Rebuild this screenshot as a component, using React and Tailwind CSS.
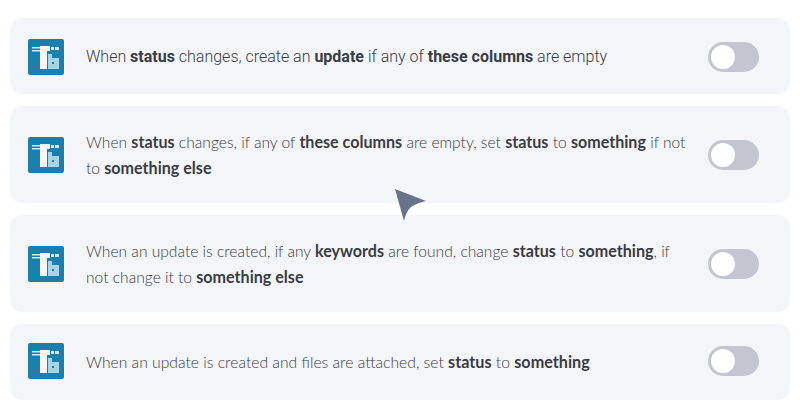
import React from 'react';

const rows = [
  {
    id: 1,
    height: 'h-[76px]',
    side: 'mt-[2px]',
    textStyle: "font-['Roboto',sans-serif] text-[16px] [&_b]:text-[16px]",
    text: (
      <>
        When <b>status</b> changes, create an <b>update</b> if any of <b>these columns</b> are empty
      </>
    ),
  },
  {
    id: 2,
    height: 'h-[97px]',
    side: '',
    textStyle: 'text-[15.6px] [&_b]:text-[16.1px]',
    text: (
      <>
        When <b>status</b> changes, if any of <b>these columns</b> are empty, set <b>status</b> to <b>something</b> if not
        to <b>something else</b>
      </>
    ),
  },
  {
    id: 3,
    height: 'h-[97px]',
    side: '',
    textStyle: 'text-[15.6px] [&_b]:text-[16.1px]',
    text: (
      <>
        When an update is created, if any <b>keywords</b> are found, change <b>status</b> to <b>something</b>, if
        not change it to <b>something else</b>
      </>
    ),
  },
  {
    id: 4,
    height: 'h-[76px]',
    side: 'mb-[3px]',
    textStyle: 'text-[15.7px] [&_b]:text-[16.2px]',
    text: (
      <>
        When an update is created and files are attached, set <b>status</b> to <b>something</b>
      </>
    ),
  },
];

const Logo = ({ className }) => (
  <svg width="36" height="36" viewBox="0 0 36 36" className={`shrink-0 ${className}`}>
    <rect width="36" height="36" rx="2" fill="#1a7fad" />
    <rect x="12" y="7" width="7" height="23" fill="#f4f8fb" />
    <rect x="4" y="8" width="8" height="1.5" fill="#d5e7f0" />
    <rect x="4" y="11" width="8" height="1.5" fill="#d5e7f0" />
    <rect x="19" y="7" width="3" height="5" fill="#f4f8fb" />
    <rect x="23" y="8" width="8" height="3" fill="#d5e7f0" />
    <rect x="26" y="7" width="1" height="5" fill="#1a7fad" />
    <rect x="20" y="15" width="4" height="15" fill="#a8d4e8" />
    <rect x="20" y="19" width="11" height="11" fill="#a8d4e8" />
    <rect x="24" y="23" width="2" height="2" fill="#1a7fad" />
  </svg>
);

const Toggle = ({ className }) => (
  <div className={`flex h-[30px] w-[51px] shrink-0 items-center rounded-full bg-[#c3c6d0] pl-[3px] ${className}`}>
    <div className="h-6 w-6 rounded-full bg-white" />
  </div>
);

const Row = ({ row }) => (
  <div className={`flex items-center rounded-xl bg-[#f4f5f8] pl-[18px] pr-[31px] ${row.height}`}>
    <Logo className={row.side} />
    <p className={`ml-[22px] w-[608px] font-light leading-[25px] text-[#3a3c44] [&_b]:font-bold ${row.textStyle}`}>{row.text}</p>
    <div className="flex-1" />
    <Toggle className={row.side} />
  </div>
);

const App = () => (
  <div className="relative h-[419px] w-[800px] overflow-hidden bg-white font-['Lato','Liberation_Sans',sans-serif]">
    <div className="flex flex-col gap-3 px-[10px] pt-[18px]">
      {rows.map((row) => (
        <Row key={row.id} row={row} />
      ))}
    </div>
    <svg width="36" height="36" viewBox="0 0 36 36" className="absolute left-[393px] top-[187px]">
      <path d="M2 2 L33 14 Q21 17 17 21 Q13 25 11 34 Z" fill="#67738a" />
    </svg>
  </div>
);

export default App;
